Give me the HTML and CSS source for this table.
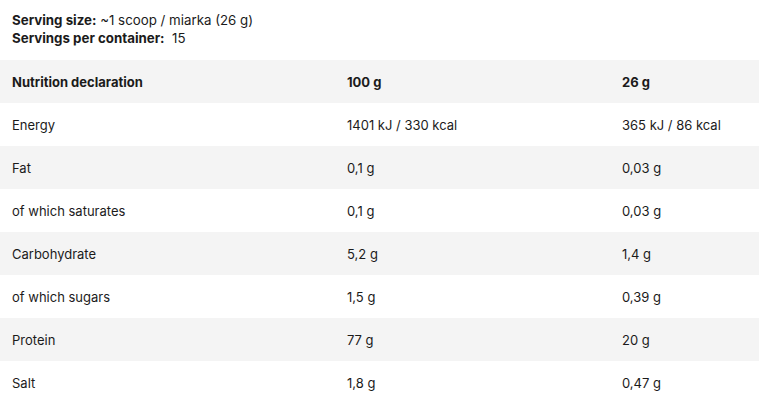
FILE: index.html
```html
<!DOCTYPE html>
<html>
<head>
<meta charset="utf-8">
<link rel="stylesheet" href="styles.css">
</head>
<body>
<div class="serving">
  <div class="line"><span class="label">Serving size:</span> ~1 scoop / miarka (26 g)</div>
  <div class="line"><span class="label">Servings per container:</span>&nbsp; 15</div>
</div>
<table class="nutri">
  <thead>
    <tr><th class="c1">Nutrition declaration</th><th class="c2">100 g</th><th class="c3">26 g</th></tr>
  </thead>
  <tbody>
    <tr><td>Energy</td><td>1401 kJ / 330 kcal</td><td>365 kJ / 86 kcal</td></tr>
    <tr><td>Fat</td><td>0,1 g</td><td>0,03 g</td></tr>
    <tr><td>of which saturates</td><td>0,1 g</td><td>0,03 g</td></tr>
    <tr><td>Carbohydrate</td><td>5,2 g</td><td>1,4 g</td></tr>
    <tr><td>of which sugars</td><td>1,5 g</td><td>0,39 g</td></tr>
    <tr><td>Protein</td><td>77 g</td><td>20 g</td></tr>
    <tr><td>Salt</td><td>1,8 g</td><td>0,47 g</td></tr>
  </tbody>
</table>
</body>
</html>
```
FILE: styles.css
```css
html, body {
  margin: 0;
  padding: 0;
  background: #ffffff;
}
body {
  font-family: "Inter", "Liberation Sans", sans-serif;
  color: #1b1b1b;
}
.serving {
  padding: 11px 12px 0 12px;
  height: 60px;
  box-sizing: border-box;
  font-size: 13.3px;
  line-height: 18px;
}
.label {
  font-weight: 700;
}
.nutri {
  width: 759px;
  border-collapse: collapse;
  table-layout: fixed;
  font-size: 13px;
}
.nutri th, .nutri td {
  height: 43px;
  padding: 0 0 0 12px;
  text-align: left;
  vertical-align: middle;
  box-sizing: border-box;
}
.nutri th {
  font-weight: 700;
}
.c1 { width: 335px; }
.c2 { width: 275px; }
.nutri thead tr,
.nutri tbody tr:nth-child(even) {
  background: #f4f4f4;
}
```
